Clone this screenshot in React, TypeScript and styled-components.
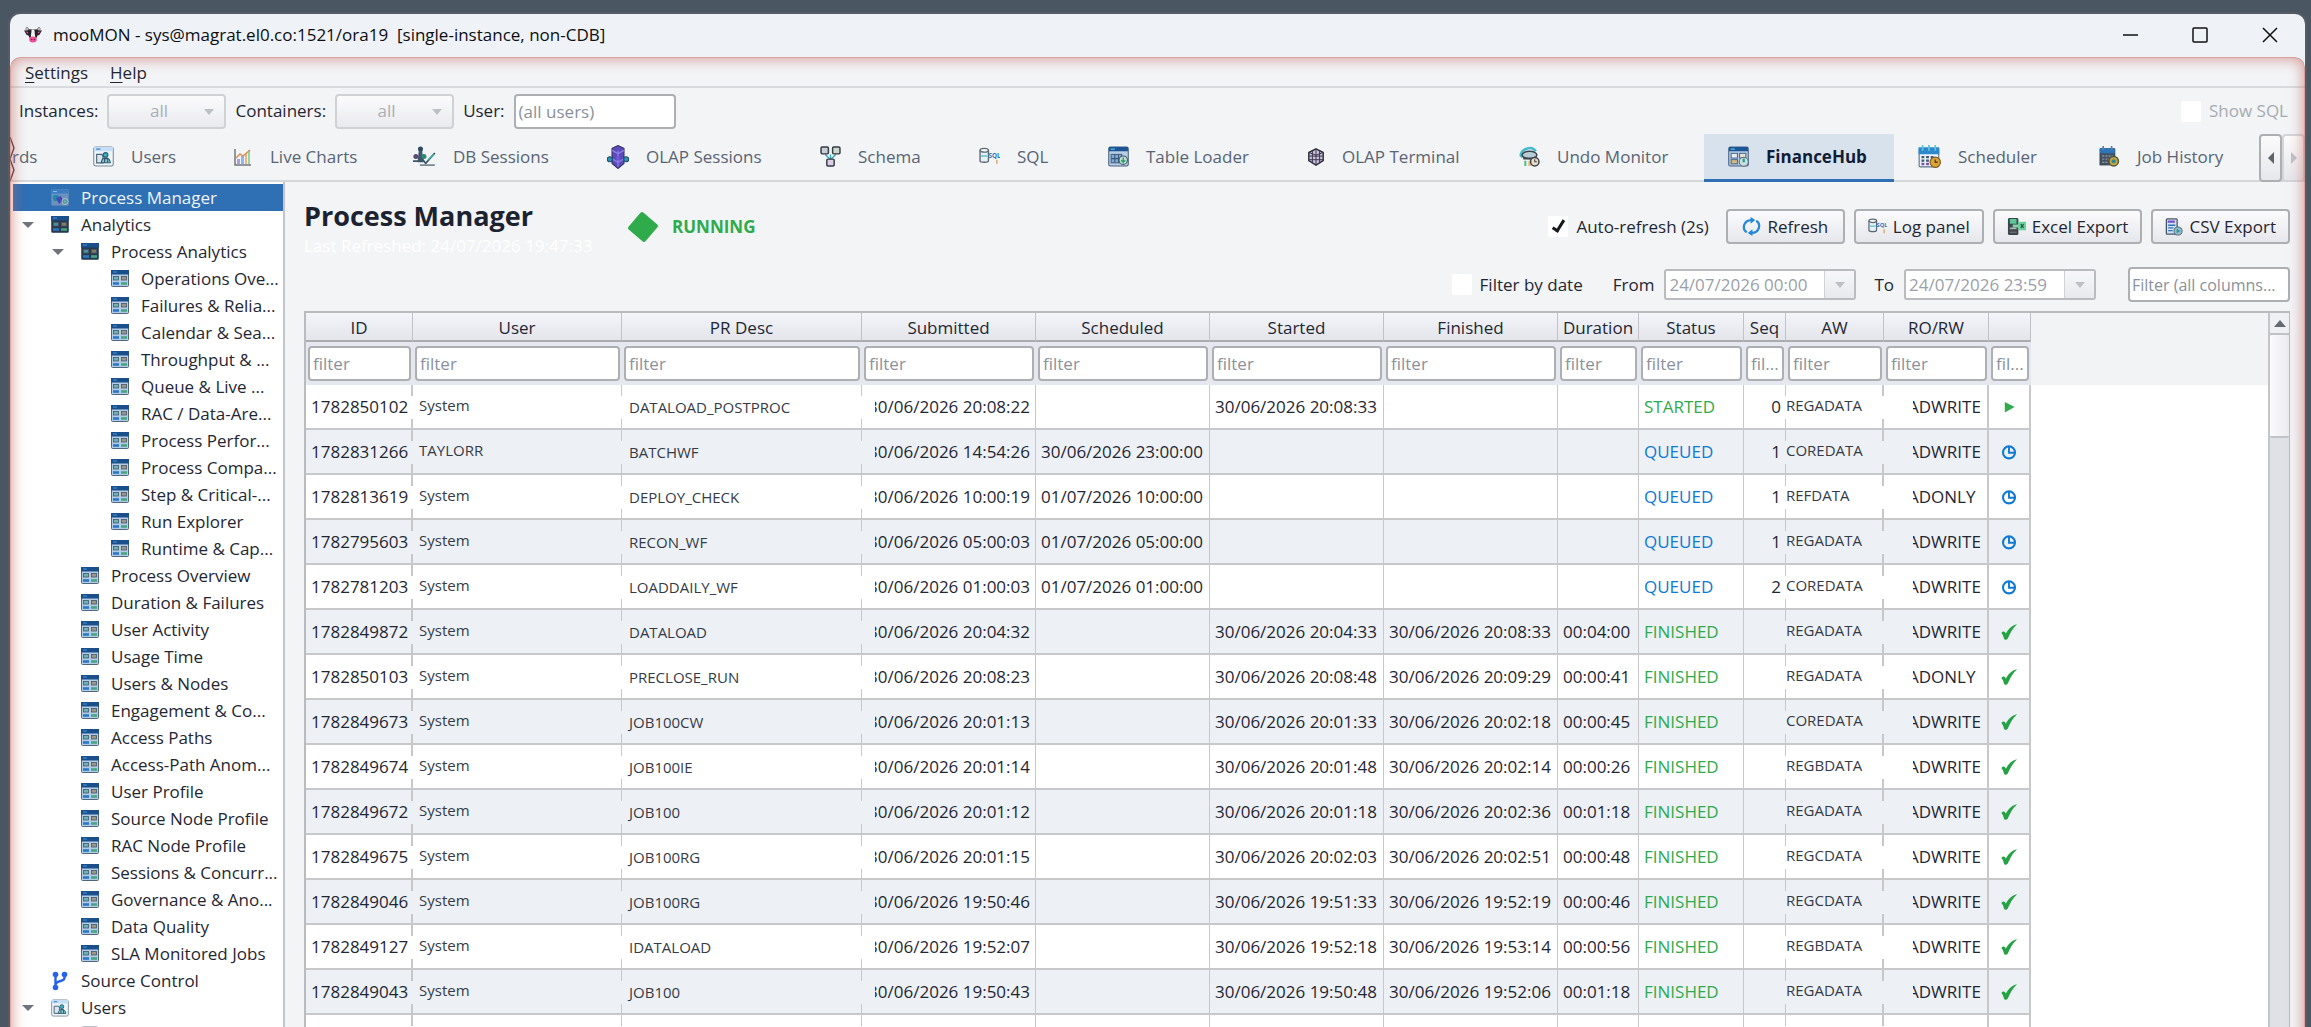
import React from 'react';
import styled, { createGlobalStyle } from 'styled-components';

const GlobalStyle = createGlobalStyle`
  *, *::before, *::after { box-sizing: border-box; }
  body { margin: 0; overflow: hidden; }
  body, input, select, button {
    font-family: 'Open Sans', 'Noto Sans', sans-serif;
    font-size: 17px;
    line-height: 24px;
    color: #1f2733;
  }
`;

const line = '#c8c8ca';
const ctlBorder = '#adafb3';

/* ---------- window frame ---------- */

const Desktop = styled.div`
  height: 100vh;
  padding: 14px 6px 0 10px;
  background: #4b5663;
  overflow: hidden;
`;

const Win = styled.div`
  height: 100%;
  display: flex;
  flex-direction: column;
  border-radius: 10px 10px 0 0;
  background: #eff3f8;
  overflow: hidden;
  box-shadow: 0 0 0 2px #555c66;
`;

const TitleBar = styled.header`
  flex: none;
  height: 43px;
  display: flex;
  align-items: center;
  padding: 0 0 2px 14px;
`;

const TitleText = styled.span`
  flex: 1;
  margin-left: 11px;
  color: #0c0e12;
  white-space: pre;
`;

const CaptionButton = styled.button`
  width: 70px;
  height: 41px;
  padding: 0;
  border: 0;
  background: none;
  display: grid;
  place-items: center;
`;

const Client = styled.div`
  position: relative;
  flex: 1;
  min-height: 0;
  display: flex;
  flex-direction: column;
  border-radius: 10px 10px 0 0;
  background: #f2f4f6;
  overflow: hidden;
  &::after {
    content: '';
    position: absolute;
    inset: 0 0 -20px 0;
    border-radius: 10px;
    pointer-events: none;
    box-shadow: inset 0 0 14px 2px rgba(200, 105, 98, 0.65), inset 0 0 0 1px rgba(200, 130, 125, 0.4);
  }
`;

const MenuBar = styled.nav`
  flex: none;
  height: 31px;
  display: flex;
  align-items: center;
  gap: 22px;
  padding: 2px 15px 0;
  border-bottom: 2px solid #d8dadd;
`;

const MenuItem = styled.button`
  padding: 0;
  border: 0;
  background: none;
  &::first-letter { text-decoration: underline; text-underline-offset: 3px; }
`;

const ToolBar = styled.div`
  flex: none;
  height: 46px;
  display: flex;
  align-items: center;
  gap: 9px;
  padding: 0 17px 0 9px;
`;

const SelectBox = styled.span`
  position: relative;
  display: inline-flex;
  width: 119px;
`;

const Select = styled.select`
  appearance: none;
  width: 100%;
  height: 35px;
  padding: 0 16px 0 0;
  border: 2px solid #cfd1d5;
  border-radius: 4px;
  background: linear-gradient(#fbfbfc, #e9eaee);
  color: #a9aeb6;
  opacity: 1;
  text-align-last: center;
`;

const Caret = styled.span<{ $color?: string; $size?: number }>`
  width: 0;
  height: 0;
  border: ${(p) => p.$size ?? 5}px solid transparent;
  border-top-color: ${(p) => p.$color ?? '#bcc0c6'};
  border-top-width: 6px;
  border-bottom: 0;
`;

const SelectCaret = styled(Caret)`
  position: absolute;
  right: 12px;
  top: 15px;
  pointer-events: none;
`;

const TextInput = styled.input<{ $w?: string }>`
  width: ${(p) => p.$w ?? '100%'};
  height: 35px;
  padding: 0 3px;
  border: 2px solid ${ctlBorder};
  border-radius: 4px;
  background: #fff;
  text-overflow: ellipsis;
  &::placeholder { color: #8b919c; opacity: 1; }
`;

const CheckLabel = styled.label<{ $off?: boolean; $push?: boolean }>`
  display: inline-flex;
  align-items: center;
  gap: 8px;
  margin-left: ${(p) => (p.$push ? 'auto' : 0)};
  color: ${(p) => (p.$off ? '#a6abb3' : '#1f2733')};
`;

const Check = styled.input`
  appearance: none;
  width: 20px;
  height: 21px;
  margin: 0;
  border-radius: 2px;
  background: #fff;
  display: grid;
  place-items: center;
  &:checked::after {
    content: '';
    width: 7px;
    height: 14px;
    margin-top: -4px;
    border: solid #15181d;
    border-width: 0 3px 3px 0;
    transform: rotate(32deg);
  }
`;

/* ---------- tabs ---------- */

const TabStrip = styled.div`
  position: relative;
  flex: none;
  height: 48px;
  display: flex;
  border-bottom: 2px solid #d5d8db;
`;

const TabList = styled.div`
  flex: 1;
  display: flex;
  overflow: hidden;
  margin-bottom: -2px;
`;

const Tab = styled.button<{ $w: number; $active?: boolean; $cut?: boolean }>`
  flex: none;
  width: ${(p) => p.$w}px;
  height: 48px;
  display: flex;
  align-items: center;
  gap: 17px;
  padding: 0 0 0 ${(p) => (p.$cut ? 2 : 24)}px;
  border: 0;
  border-bottom: 3px solid ${(p) => (p.$active ? '#2f6fb3' : 'transparent')};
  background: ${(p) => (p.$active ? '#d8e2ed' : 'transparent')};
  color: ${(p) => (p.$active ? '#101d36' : '#596474')};
  font-weight: ${(p) => (p.$active ? 700 : 400)};
  white-space: nowrap;
`;

const TornEdge = styled.svg`
  position: absolute;
  left: 0;
  top: 3px;
`;

const ScrollButton = styled.button<{ $dim?: boolean }>`
  width: 23px;
  height: 48px;
  margin-bottom: -2px;
  padding: 0;
  border: 2px solid ${(p) => (p.$dim ? '#d3d5d9' : ctlBorder)};
  border-radius: 4px;
  background: linear-gradient(#fbfbfc, #e6e7eb);
  display: grid;
  place-items: center;
`;

/* ---------- tree ---------- */

const Body = styled.div`
  flex: 1;
  min-height: 0;
  display: flex;
`;

const Tree = styled.ul`
  flex: none;
  width: 275px;
  margin: 0;
  padding: 2px 0 0 3px;
  list-style: none;
  background: #fff;
  border-right: 2px solid #c3c5c8;
  overflow: hidden;
`;

const TreeRow = styled.li<{ $level: number; $selected?: boolean }>`
  height: 27px;
  display: flex;
  align-items: center;
  gap: 12px;
  padding-left: ${(p) => p.$level * 30 - 21}px;
  background: ${(p) => (p.$selected ? '#2f6fb3' : 'none')};
  color: ${(p) => (p.$selected ? '#eef4fb' : '#1f2733')};
  white-space: nowrap;
`;

const Twisty = styled.span`
  flex: none;
  width: 17px;
  display: flex;
`;

/* ---------- page ---------- */

const Page = styled.main`
  flex: 1;
  min-width: 0;
  display: flex;
  flex-direction: column;
  padding: 0 15px 0 19px;
`;

const PageHead = styled.div`
  flex: none;
  display: flex;
  justify-content: space-between;
  padding-bottom: 9px;
`;

const HeadLeft = styled.div`
  display: flex;
  gap: 20px;
`;

const Titles = styled.div`
  width: 303px;
  padding-top: 17px;
`;

const Heading = styled.h1`
  margin: 0;
  font-size: 27px;
  line-height: 34px;
  font-weight: 700;
  color: #1c2230;
`;

const Refreshed = styled.p`
  margin: 0;
  color: #fff;
  line-height: 26px;
  white-space: nowrap;
`;

const Status = styled.div`
  height: 35px;
  margin-top: 27px;
  display: flex;
  align-items: center;
  gap: 13px;
  font-weight: 700;
  color: #2fab4b;
`;

const HeadRight = styled.div`
  padding-top: 27px;
  display: flex;
  flex-direction: column;
  align-items: flex-end;
  gap: 23px;
`;

const Actions = styled.div`
  display: flex;
  align-items: center;
  gap: 9px;
`;

const Button = styled.button`
  height: 35px;
  min-width: 119px;
  padding: 0 12px;
  display: inline-flex;
  align-items: center;
  justify-content: center;
  gap: 6px;
  border: 2px solid ${ctlBorder};
  border-radius: 4px;
  background: linear-gradient(#fbfbfc, #e6e7ec);
  white-space: nowrap;
`;

const AutoRefresh = styled(CheckLabel)`
  margin-right: 8px;
`;

const Filters = styled.div`
  display: flex;
  align-items: center;
  gap: 12px;
`;

const DateGroup = styled.label<{ $gap: number }>`
  display: inline-flex;
  align-items: center;
  gap: 10px;
  margin-left: ${(p) => p.$gap}px;
`;

const DateBox = styled.span`
  display: inline-flex;
  width: 192px;
  height: 31px;
  border: 2px solid #b9bbbf;
  border-radius: 3px;
  background: #fff;
`;

const DateInput = styled.input`
  flex: 1;
  min-width: 0;
  padding: 0 3px;
  border: 0;
  background: none;
  color: #9aa0a9;
`;

const DateDrop = styled.button`
  width: 30px;
  padding: 0;
  border: 0;
  border-left: 1px solid #d0d2d5;
  background: linear-gradient(#f7f7f9, #e8e9ed);
  display: grid;
  place-items: center;
`;

const SearchWrap = styled.div`
  margin-left: 20px;
`;

const SearchInput = styled(TextInput)`
  padding: 0 2px;
  font-size: 16px;
`;

/* ---------- grid ---------- */

const GridFrame = styled.div`
  flex: 1;
  min-height: 0;
  display: flex;
  border: 2px solid #b9bbbe;
  border-width: 2px 1px 0 2px;
  overflow: hidden;
`;

const GridView = styled.div`
  flex: 1;
  min-width: 0;
  overflow: hidden;
  background: linear-gradient(#f2f3f5 0 72px, #fff 72px);
`;

const Table = styled.table`
  table-layout: fixed;
  width: 1725px;
  border-collapse: separate;
  border-spacing: 0;
`;

const Th = styled.th`
  height: 29px;
  padding: 3px 0 0;
  border-right: 1px solid #c0c2c7;
  border-bottom: 2px solid #a9abaf;
  background: linear-gradient(#f3f5f9, #e3e5eb);
  font-weight: 400;
  line-height: 24px;
  text-align: center;
  white-space: nowrap;
`;

const FilterCell = styled.td`
  height: 43px;
  padding: 4px 2px;
  background: #e6e8f0;
  vertical-align: top;
`;

const Tr = styled.tr`
  background: #fff;
  &:nth-child(even) { background: #edf1f6; }
`;

const Td = styled.td<{ $thick?: boolean; $gap?: boolean; $align?: string }>`
  height: 45px;
  padding: 0 5px;
  border-bottom: 2px solid ${line};
  text-align: ${(p) => p.$align ?? 'left'};
  white-space: nowrap;
  overflow: hidden;
  background: ${(p) =>
      p.$gap
        ? `linear-gradient(${line} 0 11px, transparent 11px 34px, ${line} 34px)`
        : `linear-gradient(${line}, ${line})`}
    right / ${(p) => (p.$thick ? 2 : 1)}px 100% no-repeat;
`;

const SmallTd = styled(Td)`
  padding-left: 7px;
  font-size: 15px;
  color: #343b47;
`;

const UserTd = styled(SmallTd)`
  padding: 0 5px 3px 6px;
`;

const AreaTd = styled(SmallTd)`
  padding: 0 0 3px;
`;

const DateClip = styled.span`
  display: flex;
  justify-content: flex-end;
  margin: 0 1px 0 8px;
  overflow: hidden;
`;

const ModeClip = styled.span`
  display: block;
  width: 72px;
  margin-left: 24px;
  overflow: hidden;
  text-indent: -5px;
`;

const StatusText = styled.span<{ $s: string }>`
  color: ${(p) => (p.$s === 'QUEUED' ? '#0e7ad3' : '#2fab4b')};
`;

const IconTd = styled(Td)`
  padding: 0 2px 0 0;
  svg { display: block; margin: 0 auto; }
`;

const ScrollBar = styled.div`
  flex: none;
  width: 21px;
  display: flex;
  flex-direction: column;
  border-left: 2px solid #c3c5c9;
  background: #dfe1e6;
`;

const ScrollUp = styled.button`
  height: 22px;
  padding: 0;
  border: 0;
  border-bottom: 2px solid #c0c2c6;
  background: #eff0f3;
  display: grid;
  place-items: center;
`;

const Thumb = styled.div`
  height: 103px;
  border-bottom: 2px solid #c0c2c6;
  border-radius: 2px;
  background: linear-gradient(90deg, #fbfbfc, #eaebee);
`;

/* ---------- icons ---------- */

const Svg = ({ s = 20, children }: { s?: number; children: React.ReactNode }) => (
  <svg width={s} height={s} viewBox="0 0 20 20" style={{ flex: 'none' }} fill="none">{children}</svg>
);

const CowIcon = () => (
  <Svg s={18}>
    <path d="M4 6C1 5 2 1 3.500 1.500S5 4 7 4.500h6c2-.5 2-2.500 3.500-3S19 5 16 6z" fill="#d8d0c8" stroke="#555" strokeWidth=".7" />
    <path d="M0 5l6 0 1 6-4-1zM20 5l-6 0-1 6 4-1z" fill="#2a2430" />
    <path d="M1.500 6l3 .8.500 2zM18.500 6l-3 .8-.5 2z" fill="#e95a9a" />
    <path d="M4 4h12l-1.500 8-2 3h-5l-2-3z" fill="#27232c" />
    <path d="M8.500 4h3l1 9h-5z" fill="#f4f2f0" />
    <ellipse cx="10" cy="15" rx="4.200" ry="3.200" fill="#ec4f96" />
    <circle cx="8.500" cy="15" r=".8" fill="#7d1f4b" /><circle cx="11.500" cy="15" r=".8" fill="#7d1f4b" />
  </Svg>
);

const UsersIcon = ({ s = 21 }: { s?: number }) => (
  <Svg s={s}>
    <rect x=".7" y="1" width="18.600" height="18" rx="2" fill="#eef5fb" stroke="#7c8c9c" />
    <rect x="1" y="1" width="18" height="4" fill="#c5dff6" />
    <path d="M3 3h4" stroke="#3b82d0" strokeWidth="1.200" />
    <path d="M3.500 8h5l1 2v6h-6z" fill="#dbe7ef" stroke="#4d6478" strokeWidth="1.100" />
    <circle cx="12" cy="8.500" r="2.200" fill="#34b6c0" stroke="#2b5b78" />
    <path d="M8 16c0-6 8-6 8.500 0z" fill="#7cc9d2" stroke="#2b5b78" />
    <path d="M11 16v-4h3v4" stroke="#3d5468" />
  </Svg>
);

const LiveIcon = () => (
  <Svg s={20}>
    <path d="M2 2v16h16" stroke="#73777e" strokeWidth="1.500" />
    <path d="M4 12h3v5H4z" fill="#b49be0" /><path d="M8 9h3v8H8z" fill="#8fb5ee" />
    <path d="M12 6h2v11h-2z" fill="#f0b08a" /><path d="M15 3h2v14h-2z" fill="#8fd8a0" />
    <path d="M3 11l4-4 3 2 7-6" stroke="#d99058" strokeWidth="1.500" />
  </Svg>
);

const DbSessIcon = () => (
  <Svg s={23}>
    <circle cx="6.500" cy="3.500" r="2.200" fill="#2e4a60" />
    <path d="M5 5h3l1 10H4z" fill="#40566b" />
    <circle cx="2.500" cy="10" r="2.200" fill="#5a4a78" /><circle cx="9.500" cy="10" r="2.200" fill="#2c8a72" />
    <path d="M0 14h10M8 12l3 4 8-9" stroke="#3e5568" strokeWidth="1.500" />
    <path d="M6 17.500h13" stroke="#7b8894" strokeWidth="1.400" />
    <path d="M13 13l5-5" stroke="#39b6a6" strokeWidth="1.200" />
  </Svg>
);

const OlapIcon = () => (
  <svg width="22" height="24" viewBox="0 0 20 22" style={{ flex: 'none' }} fill="none">
    <path d="M10 .5l5.500 2.500v14L10 21.500 4.500 17V3z" fill="#5a4bb8" stroke="#3a3568" />
    <path d="M10 5v15M4.500 5l5.500 3 5.500-3M5 13l5 3 5-3" stroke="#8c7be6" strokeWidth="1.300" />
    <circle cx="2.500" cy="13" r="2.300" fill="#2a97b8" stroke="#224c6b" /><circle cx="17.500" cy="13" r="2.300" fill="#2a97b8" stroke="#224c6b" />
    <circle cx="10" cy="12" r="2" fill="#6f57dd" />
  </svg>
);

const SchemaIcon = () => (
  <Svg s={21}>
    <path d="M5 8l5 5 5-5M10 8v5" stroke="#3aa6b8" strokeWidth="1.300" />
    <rect x="1" y="1" width="7" height="6.500" rx="1" fill="#c9cdd4" stroke="#353a44" strokeWidth="1.400" />
    <rect x="12" y="1" width="7" height="6.500" rx="1" fill="#cdd8cc" stroke="#353a44" strokeWidth="1.400" />
    <rect x="6.500" y="12.500" width="7" height="6.500" rx="1" fill="#ddcfe4" stroke="#353a44" strokeWidth="1.400" />
  </Svg>
);

const SqlIcon = ({ s = 21 }: { s?: number }) => (
  <svg width={s} height={s} viewBox="0 0 20 20" fill="none">
    <path d="M1 4v10c0 2 8 2 8 0V4" fill="#e6f1f5" stroke="#5c6770" strokeWidth="1.300" />
    <ellipse cx="5" cy="4" rx="4" ry="1.800" fill="#f3f6f8" stroke="#5c6770" strokeWidth="1.300" />
    <path d="M2 9.500h6" stroke="#5cc1cf" strokeWidth="1.300" />
    <text x="9" y="11" fontSize="6" fontWeight="700" fontFamily="Open Sans, sans-serif" fill="#2677be">SQL</text>
    <path d="M17 13v4" stroke="#d69a55" strokeWidth="1.200" />
  </svg>
);

const WindowBase = () => (
  <>
    <rect x=".7" y="1" width="18.600" height="18" rx="1.500" fill="#b8cde4" stroke="#456080" />
    <path d="M1 1h18v4H1z" fill="#1c5596" />
    <path d="M2.500 3h4" stroke="#4fc0e6" strokeWidth="1.200" />
  </>
);

const LoaderIcon = () => (
  <Svg s={21}>
    <WindowBase />
    <rect x="3" y="8" width="10" height="8" fill="#86a9cf" stroke="#3f6288" />
    <path d="M3 12h10M6.500 8v8M10 8v8" stroke="#335679" />
    <circle cx="14.500" cy="13.500" r="4" fill="#c8dcd8" stroke="#3b5a6c" />
    <path d="M14.500 11v4.500M12.500 13.500l2 2 2-2" stroke="#29a35d" strokeWidth="1.400" />
  </Svg>
);

const TerminalIcon = () => (
  <Svg s={18}>
    <path d="M10 1l8 4v9l-8 5-8-5V5z" fill="#c9bfda" stroke="#2e2d3a" strokeWidth="1.600" />
    <path d="M10 1v18M6 3v14M14 3v14M2 9h16M2 5l8 3 8-3M2 13h16" stroke="#3b3a4b" strokeWidth="1.100" />
  </Svg>
);

const UndoIcon = () => (
  <Svg s={21}>
    <path d="M2 10C1 3 12-1 16 5" stroke="#46bccb" strokeWidth="2.400" />
    <path d="M0 8l2.500 4L6 8z" fill="#46bccb" />
    <ellipse cx="10" cy="8.500" rx="7" ry="3.500" fill="#b7ccd4" stroke="#3b444d" strokeWidth="1.400" />
    <path d="M4 12h9" stroke="#3b444d" strokeWidth="1.600" />
    <path d="M6 14v5" stroke="#56c08e" strokeWidth="2" /><path d="M10 14v5" stroke="#eab253" strokeWidth="2" />
    <circle cx="15" cy="15" r="4" fill="#efdcc4" stroke="#3b444d" strokeWidth="1.400" />
    <path d="M15 12.500V15h2" stroke="#3b444d" />
  </Svg>
);

const HubIcon = () => (
  <Svg s={21}>
    <WindowBase />
    <rect x="3" y="7" width="6" height="4.500" fill="#e5edf6" stroke="#4a6c92" />
    <rect x="11" y="7" width="6" height="4.500" fill="#e8e2cc" stroke="#4a6c92" />
    <rect x="3" y="13" width="6" height="4" fill="#d7ba78" stroke="#4a6c92" />
    <circle cx="15" cy="15" r="4.300" fill="#c9dfe0" stroke="#5c6e7d" /><path d="M15 12v3.500" stroke="#19a08c" strokeWidth="2" />
  </Svg>
);

const SchedulerIcon = () => (
  <Svg s={23}>
    <rect x="1" y="3" width="17" height="16" rx="1" fill="#edf3f8" stroke="#60768a" />
    <path d="M.5 2h18v6H.5z" fill="#2e88cd" />
    <path d="M4 0v5M9.500 0v5M15 0v5" stroke="#5cc7d4" strokeWidth="1.500" />
    <path d="M3 10.500h2.500M7 10.500h2.500M11 10.500h2.500M3 13.500h2.500M7 13.500h2.500" stroke="#435a74" strokeWidth="2" />
    <path d="M3 16.500h2.500M7 16.500h2.500" stroke="#7b55aa" strokeWidth="2" />
    <circle cx="15" cy="15" r="4.500" fill="#dda535" stroke="#7a5d2a" /><path d="M15 12.500V15h2.200" stroke="#5b431c" strokeWidth="1.200" />
  </Svg>
);

const HistoryIcon = () => (
  <Svg s={21}>
    <rect x="1" y="3" width="14" height="15" fill="#45515f" stroke="#38434f" />
    <path d="M1 2h14v5H1z" fill="#2b75b8" /><path d="M4 0v4M12 0v4" stroke="#6a7c8c" strokeWidth="1.600" />
    <path d="M3 9.500h10M3 12.500h10M3 15.500h6" stroke="#7e92a5" strokeDasharray="2 1" strokeWidth="1.400" />
    <circle cx="14" cy="14.500" r="4.500" fill="#caa23e" stroke="#4e5b3e" strokeWidth="1.400" /><circle cx="14" cy="14.500" r="2" fill="#2b8a94" />
  </Svg>
);

const GridIcon = ({ dark }: { dark?: boolean }) => (
  <svg width="18" height="18" viewBox="0 0 18 18" style={{ flex: 'none' }} fill="none">
    <rect x=".5" y=".5" width="17" height="16" rx="1" fill={dark ? '#2a3a4c' : '#b4cbe6'} stroke="#50657e" />
    <path d="M0 0h18v4.500H0z" fill="#1a4f8c" /><path d="M2 2h4" stroke="#3d9bdc" />
    <rect x="2.500" y="6.500" width="5" height="3.500" fill={dark ? '#4b8f97' : '#6fb3b0'} stroke="#40566d" strokeWidth=".8" />
    <rect x="10.500" y="6.500" width="5" height="3.500" fill={dark ? '#8a7a5c' : '#9f977f'} stroke="#40566d" strokeWidth=".8" />
    <path d="M2 13.500h6" stroke="#2878c8" strokeWidth="2.600" /><path d="M10 13.500h6" stroke="#45a583" strokeWidth="2.600" />
  </svg>
);

const ManagerIcon = () => (
  <svg width="18" height="18" viewBox="0 0 18 18" style={{ flex: 'none' }} fill="none">
    <rect x=".5" y=".5" width="17" height="16" rx="1" fill="#6c93bf" stroke="#5f83ad" />
    <path d="M.5 .5h17v4H.5z" fill="#3a7dc4" /><path d="M2 2.500h4" stroke="#7fc0f0" />
    <circle cx="5" cy="9" r="3.200" fill="#1f8ba8" /><path d="M5 9l5-2 2 5-4 3z" fill="#4a46b8" />
    <circle cx="14" cy="12.500" r="3" fill="#5d8fa3" stroke="#a9c6cf" /><circle cx="14" cy="12.500" r="1" fill="#5fd0a2" />
  </svg>
);

const BranchIcon = () => (
  <svg width="18" height="20" viewBox="0 0 18 20" style={{ flex: 'none' }} fill="none">
    <path d="M4.500 4v12M13.500 4v3c0 4-9 2-9 7" stroke="#2463eb" strokeWidth="2.400" />
    <circle cx="4.500" cy="3.500" r="2.800" fill="#2463eb" /><circle cx="13.500" cy="3.500" r="2.800" fill="#2463eb" /><circle cx="4.500" cy="16.500" r="2.800" fill="#2463eb" />
  </svg>
);

const RefreshIcon = () => (
  <Svg s={19}>
    <path d="M10 3.200C1 3.500 0 13 5 16M10 16.800c9-.3 10-9.800 5-12.800" stroke="#2587d8" strokeWidth="2.300" />
    <path d="M9 0l5 3.200-5 3.800zM11 13v7l-5-3.200z" fill="#2587d8" />
  </Svg>
);

const ExcelIcon = () => (
  <Svg s={19}>
    <rect x="1" y="1" width="11" height="18" rx="1.500" fill="#3e464d" />
    <path d="M3 2h7v5H3z" fill="#5ec794" /><path d="M3 12h7" stroke="#a9b6b5" strokeWidth="2" /><path d="M3 16h7" stroke="#7d8988" />
    <path d="M6 8h7v3H6z" fill="#83d2a8" /><rect x="12" y="5" width="8" height="9" fill="#69d19b" />
    <path d="M14.500 7.500l3 4M17.500 7.500l-3 4" stroke="#28583f" strokeWidth="1.300" />
  </Svg>
);

const CsvIcon = () => (
  <Svg s={18}>
    <rect x="1.500" y="1" width="12" height="17" rx="1" fill="#cfe0ee" stroke="#46566a" strokeWidth="1.400" />
    <path d="M3 4h8" stroke="#7a4fd0" strokeWidth="2.400" /><path d="M3.500 8h8M3.500 11h6M3.500 14h5" stroke="#3576b8" strokeWidth="1.500" />
    <circle cx="14.500" cy="14.500" r="4.500" fill="#94bcc9" stroke="#50656f" /><path d="M13 12l4 2.500-4 2.500z" fill="#2c93a4" />
  </Svg>
);

const StateIcon = ({ s }: { s: string }) => {
  if (s === 'STARTED') return <Svg s={14}><path d="M4 3l14 7-14 8z" fill="#2fab4b" /></Svg>;
  if (s === 'QUEUED')
    return <Svg s={16}><circle cx="10" cy="10.500" r="7.500" stroke="#0e7ad3" strokeWidth="2.600" /><path d="M10 3v8h7" stroke="#0e7ad3" strokeWidth="2.400" /></Svg>;
  return <Svg s={18}><path d="M1.500 11c2-2.500 4-2 5 1C9 7 13 2.500 19 1.500 14 6 11 12 8.500 17.500c-1 1.500-3.500 1.500-4 0C4 15 3 12.500 1.500 11z" fill="#25a244" /></Svg>;
};

/* ---------- data ---------- */

const tabs: { label: string; w: number; icon?: React.ReactNode; active?: boolean }[] = [
  { label: 'rds', w: 59 },
  { label: 'Users', w: 140, icon: <UsersIcon /> },
  { label: 'Live Charts', w: 180, icon: <LiveIcon /> },
  { label: 'DB Sessions', w: 194, icon: <DbSessIcon /> },
  { label: 'OLAP Sessions', w: 213, icon: <OlapIcon /> },
  { label: 'Schema', w: 159, icon: <SchemaIcon /> },
  { label: 'SQL', w: 129, icon: <SqlIcon /> },
  { label: 'Table Loader', w: 199, icon: <LoaderIcon /> },
  { label: 'OLAP Terminal', w: 212, icon: <TerminalIcon /> },
  { label: 'Undo Monitor', w: 209, icon: <UndoIcon /> },
  { label: 'FinanceHub', w: 190, icon: <HubIcon />, active: true },
  { label: 'Scheduler', w: 181, icon: <SchedulerIcon /> },
  { label: 'Job History', w: 181, icon: <HistoryIcon /> },
];

type Node = [level: number, label: string, icon?: string, open?: boolean];
const nodes: Node[] = [
  [1, 'Process Manager', 'manager'],
  [1, 'Analytics', 'dark', true],
  [2, 'Process Analytics', 'dark', true],
  ...['Operations Ove...', 'Failures & Relia...', 'Calendar & Sea...', 'Throughput & ...', 'Queue & Live ...',
    'RAC / Data-Are...', 'Process Perfor...', 'Process Compa...', 'Step & Critical-...', 'Run Explorer',
    'Runtime & Cap...'].map((l): Node => [3, l]),
  ...['Process Overview', 'Duration & Failures', 'User Activity', 'Usage Time', 'Users & Nodes', 'Engagement & Co...',
    'Access Paths', 'Access-Path Anom...', 'User Profile', 'Source Node Profile', 'RAC Node Profile',
    'Sessions & Concurr...', 'Governance & Ano...', 'Data Quality', 'SLA Monitored Jobs'].map((l): Node => [2, l]),
  [1, 'Source Control', 'branch'],
  [1, 'Users', 'users', true],
  [2, '', 'users'],
];

const treeIcon = (kind?: string) => {
  if (kind === 'manager') return <ManagerIcon />;
  if (kind === 'branch') return <BranchIcon />;
  if (kind === 'users') return <UsersIcon s={18} />;
  return <GridIcon dark={kind === 'dark'} />;
};

const columns: [string, number][] = [
  ['ID', 107], ['User', 209], ['PR Desc', 240], ['Submitted', 174], ['Scheduled', 174], ['Started', 174],
  ['Finished', 174], ['Duration', 81], ['Status', 105], ['Seq', 42], ['AW', 98], ['RO/RW', 105], ['', 42],
];

const J = '30/06/2026 ';
const rows: string[][] = [
  ['1782850102', 'System', 'DATALOAD_POSTPROC', J + '20:08:22', '', J + '20:08:33', '', '', 'STARTED', '0', 'REGADATA', 'ADWRITE'],
  ['1782831266', 'TAYLORR', 'BATCHWF', J + '14:54:26', J + '23:00:00', '', '', '', 'QUEUED', '1', 'COREDATA', 'ADWRITE'],
  ['1782813619', 'System', 'DEPLOY_CHECK', J + '10:00:19', '01/07/2026 10:00:00', '', '', '', 'QUEUED', '1', 'REFDATA', 'ADONLY'],
  ['1782795603', 'System', 'RECON_WF', J + '05:00:03', '01/07/2026 05:00:00', '', '', '', 'QUEUED', '1', 'REGADATA', 'ADWRITE'],
  ['1782781203', 'System', 'LOADDAILY_WF', J + '01:00:03', '01/07/2026 01:00:00', '', '', '', 'QUEUED', '2', 'COREDATA', 'ADWRITE'],
  ['1782849872', 'System', 'DATALOAD', J + '20:04:32', '', J + '20:04:33', J + '20:08:33', '00:04:00', 'FINISHED', '', 'REGADATA', 'ADWRITE'],
  ['1782850103', 'System', 'PRECLOSE_RUN', J + '20:08:23', '', J + '20:08:48', J + '20:09:29', '00:00:41', 'FINISHED', '', 'REGADATA', 'ADONLY'],
  ['1782849673', 'System', 'JOB100CW', J + '20:01:13', '', J + '20:01:33', J + '20:02:18', '00:00:45', 'FINISHED', '', 'COREDATA', 'ADWRITE'],
  ['1782849674', 'System', 'JOB100IE', J + '20:01:14', '', J + '20:01:48', J + '20:02:14', '00:00:26', 'FINISHED', '', 'REGBDATA', 'ADWRITE'],
  ['1782849672', 'System', 'JOB100', J + '20:01:12', '', J + '20:01:18', J + '20:02:36', '00:01:18', 'FINISHED', '', 'REGADATA', 'ADWRITE'],
  ['1782849675', 'System', 'JOB100RG', J + '20:01:15', '', J + '20:02:03', J + '20:02:51', '00:00:48', 'FINISHED', '', 'REGCDATA', 'ADWRITE'],
  ['1782849046', 'System', 'JOB100RG', J + '19:50:46', '', J + '19:51:33', J + '19:52:19', '00:00:46', 'FINISHED', '', 'REGCDATA', 'ADWRITE'],
  ['1782849127', 'System', 'IDATALOAD', J + '19:52:07', '', J + '19:52:18', J + '19:53:14', '00:00:56', 'FINISHED', '', 'REGBDATA', 'ADWRITE'],
  ['1782849043', 'System', 'JOB100', J + '19:50:43', '', J + '19:50:48', J + '19:52:06', '00:01:18', 'FINISHED', '', 'REGADATA', 'ADWRITE'],
  ['', '', '', '', '', '', '', '', '', '', '', ''],
];

const Row = ({ r }: { r: string[] }) => (
  <Tr>
    <Td $thick $gap>{r[0]}</Td>
    <UserTd $gap>{r[1]}</UserTd>
    <SmallTd $gap>{r[2]}</SmallTd>
    <Td><DateClip>{r[3]}</DateClip></Td>
    <Td>{r[4]}</Td>
    <Td>{r[5]}</Td>
    <Td>{r[6]}</Td>
    <Td>{r[7]}</Td>
    <Td><StatusText $s={r[8]}>{r[8]}</StatusText></Td>
    <Td $gap $align="right">{r[9]}</Td>
    <AreaTd $thick $gap>{r[10]}</AreaTd>
    <Td $thick><ModeClip>{r[11]}</ModeClip></Td>
    <IconTd $thick>{r[8] && <StateIcon s={r[8]} />}</IconTd>
  </Tr>
);

export default function App() {
  return (
    <Desktop>
      <GlobalStyle />
      <Win>
        <TitleBar>
          <CowIcon />
          <TitleText>{'mooMON - sys@magrat.el0.co:1521/ora19  [single-instance, non-CDB]'}</TitleText>
          <CaptionButton aria-label="Minimize">
            <svg width="15" height="16" stroke="#111" strokeWidth="1.500"><path d="M0 8h15" /></svg>
          </CaptionButton>
          <CaptionButton aria-label="Maximize">
            <svg width="16" height="16" stroke="#111" strokeWidth="1.500" fill="none"><rect x="1" y="1" width="14" height="14" rx="1" /></svg>
          </CaptionButton>
          <CaptionButton aria-label="Close">
            <svg width="16" height="16" stroke="#111" strokeWidth="1.500"><path d="M1 1l14 14M15 1L1 15" /></svg>
          </CaptionButton>
        </TitleBar>
        <Client>
          <MenuBar>
            <MenuItem>Settings</MenuItem>
            <MenuItem>Help</MenuItem>
          </MenuBar>
          <ToolBar>
            <label htmlFor="instances">Instances:</label>
            <SelectBox><Select id="instances" disabled><option>all</option></Select><SelectCaret /></SelectBox>
            <label htmlFor="containers">Containers:</label>
            <SelectBox><Select id="containers" disabled><option>all</option></Select><SelectCaret /></SelectBox>
            <label htmlFor="user">User:</label>
            <TextInput id="user" $w="162px" placeholder="(all users)" />
            <CheckLabel $off $push><Check type="checkbox" disabled />Show SQL</CheckLabel>
          </ToolBar>
          <TabStrip>
            <TabList role="tablist">
              {tabs.map((t) => (
                <Tab key={t.label} role="tab" $w={t.w} $active={t.active} $cut={!t.icon}>{t.icon}{t.label}</Tab>
              ))}
            </TabList>
            <ScrollButton aria-label="Scroll tabs left"><svg width="8" height="12"><path d="M7 0v12L1 6z" fill="#5d626b" /></svg></ScrollButton>
            <ScrollButton $dim aria-label="Scroll tabs right"><svg width="8" height="12"><path d="M1 0v12l6-6z" fill="#bfc2c8" /></svg></ScrollButton>
            <TornEdge width="6" height="44" fill="none" stroke="#4a2e30" strokeWidth="1.300"><path d="M0 0l4 11-4 11 4 11-4 11" /></TornEdge>
          </TabStrip>
          <Body>
            <Tree>
              {nodes.map(([level, label, icon, open], i) => (
                <TreeRow key={i} $level={level} $selected={i === 0}>
                  <Twisty>{open && <Caret $color="#6f747c" $size={6} />}</Twisty>
                  {treeIcon(icon)}
                  <span>{label}</span>
                </TreeRow>
              ))}
            </Tree>
            <Page>
              <PageHead>
                <HeadLeft>
                  <Titles>
                    <Heading>Process Manager</Heading>
                    <Refreshed>Last Refreshed: 24/07/2026 19:47:33</Refreshed>
                  </Titles>
                  <Status>
                    <svg width="32" height="32" viewBox="0 0 32 32"><path d="M15 3l14 12-12 14L3 17z" fill="#2fab4b" stroke="#2fab4b" strokeWidth="4" strokeLinejoin="round" /></svg>
                    RUNNING
                  </Status>
                </HeadLeft>
                <HeadRight>
                  <Actions>
                    <AutoRefresh><Check type="checkbox" defaultChecked />Auto-refresh (2s)</AutoRefresh>
                    <Button><RefreshIcon />Refresh</Button>
                    <Button><SqlIcon s={19} />Log panel</Button>
                    <Button><ExcelIcon />Excel Export</Button>
                    <Button><CsvIcon />CSV Export</Button>
                  </Actions>
                  <Filters>
                    <CheckLabel><Check type="checkbox" />Filter by date</CheckLabel>
                    <DateGroup $gap={18}>From
                      <DateBox><DateInput disabled defaultValue="24/07/2026 00:00" /><DateDrop aria-label="Pick start"><Caret /></DateDrop></DateBox>
                    </DateGroup>
                    <DateGroup $gap={6}>To
                      <DateBox><DateInput disabled defaultValue="24/07/2026 23:59" /><DateDrop aria-label="Pick end"><Caret /></DateDrop></DateBox>
                    </DateGroup>
                    <SearchWrap><SearchInput $w="162px" placeholder="Filter (all columns..." aria-label="Filter all columns" /></SearchWrap>
                  </Filters>
                </HeadRight>
              </PageHead>
              <GridFrame>
                <GridView>
                  <Table>
                    <colgroup>{columns.map(([n, w]) => <col key={n} style={{ width: w }} />)}</colgroup>
                    <thead>
                      <tr>{columns.map(([n]) => <Th key={n}>{n}</Th>)}</tr>
                      <tr>
                        {columns.map(([n, w]) => (
                          <FilterCell key={n}><TextInput aria-label={`Filter ${n || 'state'}`} placeholder={w < 50 ? 'fil...' : 'filter'} /></FilterCell>
                        ))}
                      </tr>
                    </thead>
                    <tbody>{rows.map((r, i) => <Row key={i} r={r} />)}</tbody>
                  </Table>
                </GridView>
                <ScrollBar>
                  <ScrollUp aria-label="Scroll up"><svg width="12" height="7"><path d="M0 7h12L6 0z" fill="#666b73" /></svg></ScrollUp>
                  <Thumb />
                </ScrollBar>
              </GridFrame>
            </Page>
          </Body>
        </Client>
      </Win>
    </Desktop>
  );
}
